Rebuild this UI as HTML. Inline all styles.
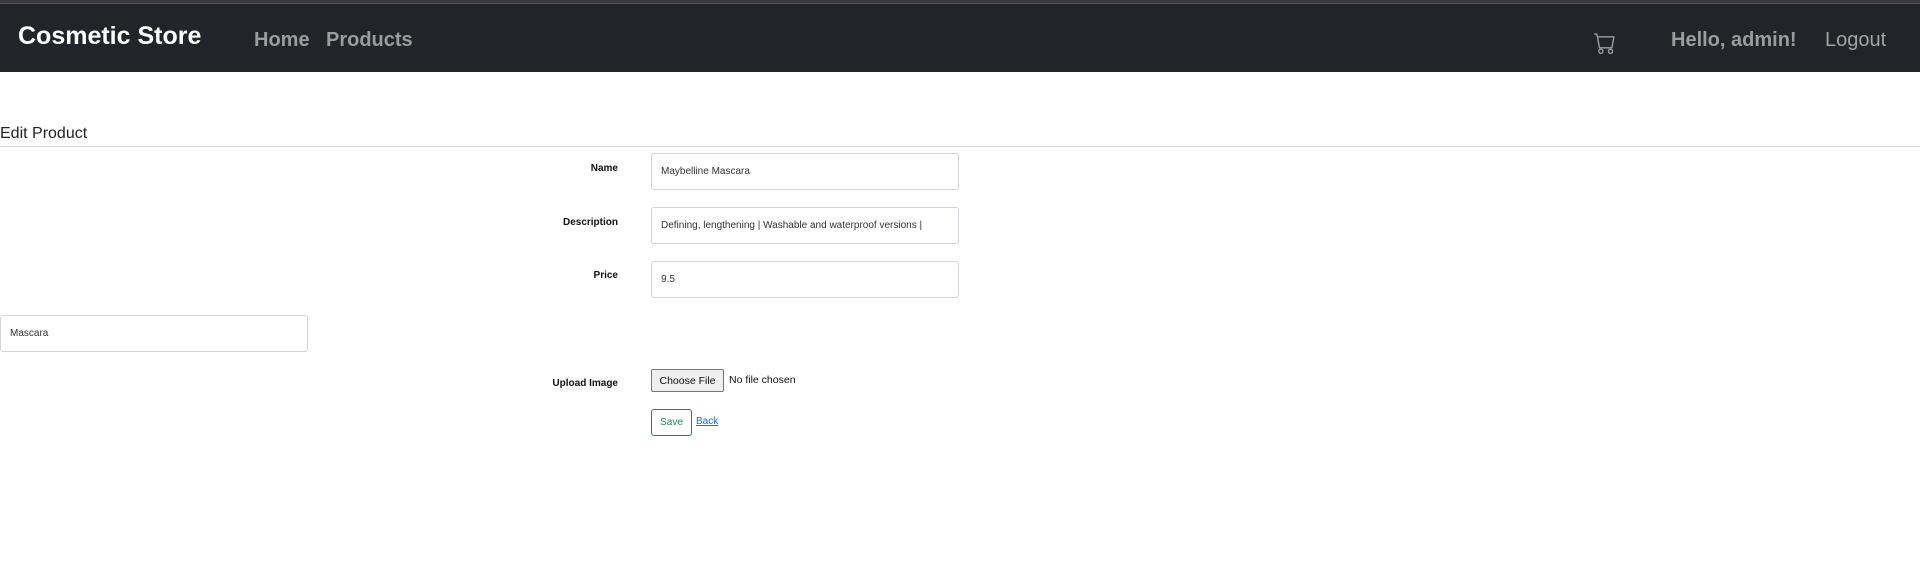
<!DOCTYPE html>
<html><head><style>
*{box-sizing:border-box;margin:0;padding:0}
body{width:1920px;height:569px;background:#fff;font-family:"Liberation Sans",sans-serif;position:relative;overflow:hidden}
.top{position:absolute;left:0;top:0;width:1920px;height:4px;background:#3a3a3a;border-bottom:1px solid #555}
.nav{position:absolute;left:0;top:4px;width:1920px;height:68px;background:#212529}
.a{position:absolute;white-space:nowrap}
.brand{left:18px;top:18px;font-size:25px;font-weight:bold;color:#fff}
.nl{font-size:20px;font-weight:bold;color:#9a9da0;top:25px}
.inp{position:absolute;border:1px solid #ced4da;border-radius:3px;background:#fff;font-size:10px;color:#333;padding-left:9px;display:flex;align-items:center}
.lbl{position:absolute;font-size:10px;font-weight:bold;color:#111;text-align:right;width:200px;left:418px}
</style></head><body>
<div class="top"></div>
<div class="nav">
<div class="a brand">Cosmetic Store</div>
<div class="a nl" style="left:254px">Home</div>
<div class="a nl" style="left:326px">Products</div>
<svg class="a" style="left:1594px;top:28px" width="22" height="22" viewBox="0 0 16 16" fill="#9a9da0"><path d="M0 1.5A.5.5 0 0 1 .5 1H2a.5.5 0 0 1 .485.379L2.89 3H14.5a.5.5 0 0 1 .491.592l-1.5 8A.5.5 0 0 1 13 12H4a.5.5 0 0 1-.491-.408L2.010 3.607 1.61 2H.5a.5.5 0 0 1-.5-.5zM3.102 4l1.313 7h8.17l1.313-7H3.102zM5 12a2 2 0 1 0 0 4 2 2 0 0 0 0-4zm7 0a2 2 0 1 0 0 4 2 2 0 0 0 0-4zm-7 1a1 1 0 1 1 0 2 1 1 0 0 1 0-2zm7 0a1 1 0 1 1 0 2 1 1 0 0 1 0-2z"/></svg>
<div class="a nl" style="left:1671px">Hello, admin!</div>
<div class="a nl" style="left:1825px;font-weight:normal;color:#a0a3a6">Logout</div>
</div>
<div class="a" style="left:0;top:125px;font-size:16px;color:#222">Edit Product</div>
<div class="a" style="left:0;top:146px;width:1920px;height:1px;background:#dedede"></div>
<div class="lbl" style="top:163px">Name</div>
<div class="inp" style="left:651px;top:153px;width:308px;height:37px">Maybelline Mascara</div>
<div class="lbl" style="top:217px">Description</div>
<div class="inp" style="left:651px;top:207px;width:308px;height:37px">Defining, lengthening | Washable and waterproof versions |</div>
<div class="lbl" style="top:270px">Price</div>
<div class="inp" style="left:651px;top:261px;width:308px;height:37px">9.5</div>
<div class="inp" style="left:0;top:315px;width:308px;height:37px">Mascara</div>
<div class="lbl" style="top:378px">Upload Image</div>
<div class="a" style="left:651px;top:369px;width:73px;height:23px;border:1px solid #767676;border-radius:2px;background:#efefef;font-size:10.5px;display:flex;align-items:center;justify-content:center;color:#111">Choose File</div>
<div class="a" style="left:729px;top:374px;font-size:10.5px;color:#111">No file chosen</div>
<div class="a" style="left:651px;top:409px;width:41px;height:27px;border:1px solid #198754;border-radius:3px;font-size:10px;color:#198754;display:flex;align-items:center;justify-content:center">Save</div>
<div class="a" style="left:696px;top:416px;font-size:10px;color:#0d6efd;text-decoration:underline">Back</div>
</body></html>
